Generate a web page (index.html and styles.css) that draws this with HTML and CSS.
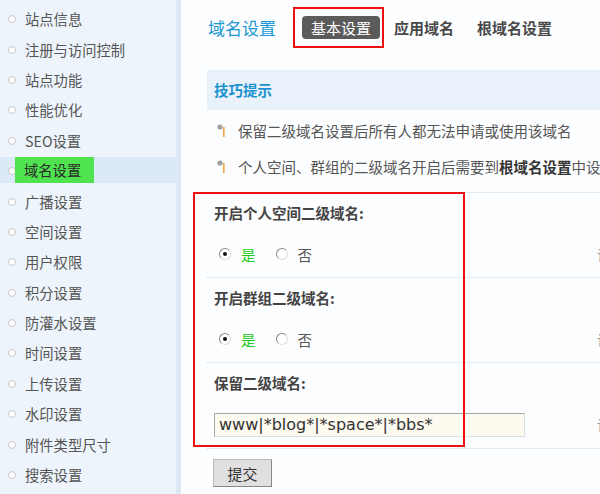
FILE: index.html
```html
<!DOCTYPE html>
<html lang="zh-CN">
<head>
<meta charset="utf-8">
<title>域名设置</title>
<link rel="stylesheet" href="styles.css">
</head>
<body>
<div class="page">
  <aside class="sidebar">
    <ul class="menu">
      <li class="menu-item"><span class="dot"></span><span class="label">站点信息</span></li>
      <li class="menu-item"><span class="dot"></span><span class="label">注册与访问控制</span></li>
      <li class="menu-item"><span class="dot"></span><span class="label">站点功能</span></li>
      <li class="menu-item"><span class="dot"></span><span class="label">性能优化</span></li>
      <li class="menu-item"><span class="dot"></span><span class="label">SEO设置</span></li>
      <li class="menu-item active"><span class="dot"></span><span class="label">域名设置</span></li>
      <li class="menu-item"><span class="dot"></span><span class="label">广播设置</span></li>
      <li class="menu-item"><span class="dot"></span><span class="label">空间设置</span></li>
      <li class="menu-item"><span class="dot"></span><span class="label">用户权限</span></li>
      <li class="menu-item"><span class="dot"></span><span class="label">积分设置</span></li>
      <li class="menu-item"><span class="dot"></span><span class="label">防灌水设置</span></li>
      <li class="menu-item"><span class="dot"></span><span class="label">时间设置</span></li>
      <li class="menu-item"><span class="dot"></span><span class="label">上传设置</span></li>
      <li class="menu-item"><span class="dot"></span><span class="label">水印设置</span></li>
      <li class="menu-item"><span class="dot"></span><span class="label">附件类型尺寸</span></li>
      <li class="menu-item"><span class="dot"></span><span class="label">搜索设置</span></li>
    </ul>
  </aside>
  <main class="main">
    <div class="header">
      <h1 class="title">域名设置</h1>
      <nav class="tabs">
        <span class="tab current">基本设置<span class="mark"></span></span>
        <span class="tab">应用域名</span>
        <span class="tab">根域名设置</span>
      </nav>
    </div>
    <div class="tips-head">技巧提示</div>
    <ul class="tips">
      <li class="tip"><svg class="tip-icon" width="10" height="14" viewBox="0 0 10 14"><circle cx="3" cy="4" r="2.6" fill="#a0a0a0"/><rect x="6" y="4" width="1.6" height="10" fill="#f2a24a"/></svg><span>保留二级域名设置后所有人都无法申请或使用该域名</span></li>
      <li class="tip"><svg class="tip-icon" width="10" height="14" viewBox="0 0 10 14"><circle cx="3" cy="4" r="2.6" fill="#a0a0a0"/><rect x="6" y="4" width="1.6" height="10" fill="#f2a24a"/></svg><span>个人空间、群组的二级域名开启后需要到<b>根域名设置</b>中设置根域名才能生效</span></li>
    </ul>
    <form class="form">
      <span class="mark form-mark"></span>
      <div class="row">
        <div class="row-label">开启个人空间二级域名:</div>
        <div class="row-value">
          <div class="cell">
            <span class="radio checked"></span><span class="opt yes">是</span>
            <span class="radio"></span><span class="opt">否</span>
          </div>
          <div class="comment">设置是否开启个人空间二级域名</div>
        </div>
      </div>
      <div class="row">
        <div class="row-label">开启群组二级域名:</div>
        <div class="row-value">
          <div class="cell">
            <span class="radio checked"></span><span class="opt yes">是</span>
            <span class="radio"></span><span class="opt">否</span>
          </div>
          <div class="comment">设置是否开启群组二级域名</div>
        </div>
      </div>
      <div class="row">
        <div class="row-label">保留二级域名:</div>
        <div class="row-value">
          <div class="cell">
            <input class="text-input" type="text" value="www|*blog*|*space*|*bbs*">
          </div>
          <div class="comment">设置保留的二级域名</div>
        </div>
      </div>
      <div class="actions">
        <button class="btn" type="button">提交</button>
      </div>
    </form>
  </main>
</div>
</body>
</html>
```
FILE: styles.css
```css
* { box-sizing: border-box; }
html, body {
  margin: 0;
  padding: 0;
  width: 600px;
  height: 494px;
  overflow: hidden;
  background: #fcfdfe;
  font-family: "Noto Sans CJK SC", "Noto Sans", sans-serif;
  font-size: 14px;
  color: #555;
}
.page {
  display: flex;
  height: 494px;
}
.sidebar {
  width: 181px;
  flex: none;
  background: #edf4fb;
  border-right: 5px solid #dbe8f5;
}
.menu {
  list-style: none;
  margin: 0;
  padding: 4px 0 0;
}
.menu-item {
  height: 30.4px;
  display: flex;
  align-items: center;
  position: relative;
  font-size: 14.3px;
}
.dot {
  width: 8px;
  height: 8px;
  border-radius: 50%;
  border: 1.5px solid #c9c9c9;
  background: #fff;
  margin-left: 8px;
  flex: none;
}
.label {
  margin-left: 9px;
  line-height: 26px;
  color: #555;
  white-space: nowrap;
}
.menu-item.active {
  background: linear-gradient(#edf4fb 0 1px, #dceaf7 1px 27px, #edf4fb 27px);
}
.menu-item.active .label {
  background: #4fe34f;
  color: #2a2a2a;
  margin-left: -1px;
  padding: 0 13px 0 9px;
  height: 26px;
  margin-top: -3px;
}
.main {
  flex: 1;
  min-width: 0;
  overflow: hidden;
  font-size: 14.5px;
}
.header {
  display: flex;
  align-items: center;
  padding: 16px 0 0 27px;
  height: 39px;
}
.title {
  margin: 0;
  font-size: 17px;
  font-weight: normal;
  color: #2198d4;
  line-height: 23px;
  margin-right: 26px;
}
.tabs {
  display: flex;
  gap: 5px;
}
.tab {
  position: relative;
  height: 23px;
  line-height: 23px;
  padding: 0 9px;
  font-size: 15px;
  font-weight: bold;
  color: #484848;
  white-space: nowrap;
}
.tab.current {
  background: #5b5b5b;
  color: #fff;
  font-weight: normal;
  border-radius: 4px;
}
.mark {
  position: absolute;
  border: 2px solid #ee1111;
  pointer-events: none;
}
.tab .mark {
  left: -9px;
  top: -9px;
  width: 91px;
  height: 41px;
}
.tips-head {
  margin: 31px 0 0 26px;
  height: 40px;
  line-height: 40px;
  padding-left: 7px;
  background: #e9f2fa;
  color: #1c92d0;
  font-weight: bold;
}
.tips {
  list-style: none;
  margin: 0 0 0 26px;
  padding: 2px 0 8px;
  border-bottom: 1px dotted #c4daee;
}
.tip {
  height: 36px;
  display: flex;
  align-items: center;
  white-space: nowrap;
  color: #555;
}
.tip b { color: #333; }
.tip-icon {
  margin-left: 10px;
  margin-right: 11px;
  flex: none;
}
.form {
  position: relative;
  margin-left: 26px;
}
.form-mark {
  left: -14px;
  top: -1px;
  width: 272px;
  height: 255px;
}
.row {
  border-bottom: 1px dotted #c4daee;
  padding-left: 7px;
}
.row-label {
  height: 41px;
  line-height: 40px;
  font-weight: bold;
  color: #444;
}
.row-value {
  height: 43px;
  display: flex;
  align-items: flex-start;
}
.row:nth-child(4) .row-value { height: 44px; }
.cell {
  width: 383px;
  flex: none;
  height: 40px;
  display: flex;
  align-items: center;
}
.comment {
  font-size: 14px;
  color: #999;
  line-height: 40px;
  white-space: nowrap;
}
.radio {
  width: 12px;
  height: 12px;
  border-radius: 50%;
  border: 1px solid #8a8a8a;
  border-right-color: #ddd;
  border-bottom-color: #ddd;
  background: #fff;
  margin-left: 5px;
  position: relative;
  flex: none;
}
.radio.checked::after {
  content: "";
  position: absolute;
  left: 3px;
  top: 3px;
  width: 4px;
  height: 4px;
  border-radius: 50%;
  background: #111;
}
.opt {
  margin-left: 10px;
  margin-right: 15px;
  color: #555;
}
.opt.yes { color: #22cc22; }
.text-input {
  width: 311px;
  height: 24px;
  margin-top: 1px;
  border: 1px solid #a8a8a8;
  border-right-color: #ddd;
  border-bottom-color: #ddd;
  background: #fdfaf0;
  font-family: "DejaVu Sans", sans-serif;
  font-size: 16px;
  color: #333;
  padding: 0 4px;
  outline: none;
}
.actions {
  padding: 10px 0 0 6px;
}
.btn {
  width: 59px;
  height: 28px;
  background: #e0e0e0;
  border: 1px solid #bbb;
  border-right-color: #888;
  border-bottom-color: #888;
  font-family: "Noto Sans CJK SC", sans-serif;
  font-size: 15px;
  color: #333;
  padding: 0;
}
```
